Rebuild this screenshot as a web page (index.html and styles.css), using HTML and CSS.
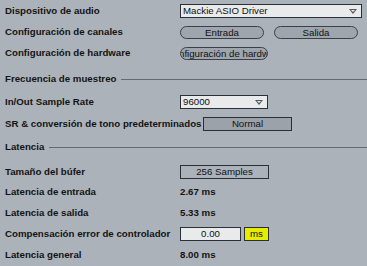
FILE: index.html
```html
<!DOCTYPE html>
<html lang="es">
<head>
    <meta charset="UTF-8">
    <title>Audio</title>
    <link rel="stylesheet" href="styles.css">
</head>
<body>
    <div class="prefs">
        <div class="row h21">
            <span class="label">Dispositivo de audio</span>
            <div class="select wide">Mackie ASIO Driver<span class="arrow"></span></div>
        </div>
        <div class="row h21">
            <span class="label">Configuración de canales</span>
            <div class="pills">
                <div class="pill">Entrada</div>
                <div class="pill">Salida</div>
            </div>
        </div>
        <div class="row h26">
            <span class="label">Configuración de hardware</span>
            <div class="pill clip"><span>nfiguración de hardw</span></div>
        </div>

        <div class="section h23">
            <span class="section-title">Frecuencia de muestreo</span>
            <span class="rule"></span>
        </div>
        <div class="row h22">
            <span class="label">In/Out Sample Rate</span>
            <div class="select">96000<span class="arrow"></span></div>
        </div>
        <div class="row h23">
            <span class="label tight">SR &amp; conversión de tono predeterminados</span>
            <div class="box dark">Normal</div>
        </div>

        <div class="section h25">
            <span class="section-title">Latencia</span>
            <span class="rule"></span>
        </div>
        <div class="row h20">
            <span class="label">Tamaño del búfer</span>
            <div class="box">256 Samples</div>
        </div>
        <div class="row h21">
            <span class="label">Latencia de entrada</span>
            <span class="value">2.67 ms</span>
        </div>
        <div class="row h21">
            <span class="label">Latencia de salida</span>
            <span class="value">5.33 ms</span>
        </div>
        <div class="row h21">
            <span class="label">Compensación error de controlador</span>
            <div class="comp">
                <div class="field">0.00</div>
                <div class="unit">ms</div>
            </div>
        </div>
        <div class="row h21">
            <span class="label">Latencia general</span>
            <span class="value">8.00 ms</span>
        </div>
    </div>
</body>
</html>
```

FILE: styles.css
```css
html, body {
    margin: 0;
    background-color: #abb2b9;
}
body {
    font-family: 'Liberation Sans', Arial, sans-serif;
    font-size: 9.7px;
    color: #141414;
    overflow: hidden;
}
.prefs {
    padding: 4px 5px 0 5px;
}
/* each row's height is the distance to the next row */
.row {
    display: grid;
    grid-template-columns: 175px 1fr;
    align-items: start;
}
.h20 { height: 20px; }
.h21 { height: 21px; }
.h22 { height: 22px; }
.h23 { height: 23px; }
.h25 { height: 25px; }
.h26 { height: 26px; }
.label, .value, .section-title {
    font-weight: bold;
    white-space: nowrap;
    line-height: 14px;
}
.label.tight {
    width: 198px;
}
.select {
    position: relative;
    box-sizing: border-box;
    width: 88px;
    height: 14px;
    line-height: 12px;
    padding-left: 2px;
    background: #e9eaeb;
    border: 1px solid #2c2f33;
    color: #111;
}
.select.wide {
    width: 182px;
}
.arrow {
    position: absolute;
    right: 4px;
    top: 4px;
    width: 0;
    height: 0;
    border-left: 4px solid transparent;
    border-right: 4px solid transparent;
    border-top: 5px solid #55595e;
}
.arrow::after {
    content: "";
    position: absolute;
    left: -2px;
    top: -4px;
    border-left: 2px solid transparent;
    border-right: 2px solid transparent;
    border-top: 2px solid #e9eaeb;
}
.pills {
    display: flex;
    gap: 10px;
}
.pill {
    box-sizing: border-box;
    width: 84px;
    height: 13px;
    margin-top: 1px;
    line-height: 11px;
    text-align: center;
    border: 1px solid #3c4046;
    border-radius: 7px;
    background: #9ea5ad;
    color: #111;
}
.pill.clip {
    width: 88px;
    overflow: hidden;
    white-space: nowrap;
    text-align: left;
}
.pill.clip span {
    margin-left: -2px;
}
.section {
    display: flex;
    align-items: center;
    gap: 5px;
    margin-right: -5px;
}
.section .section-title {
    align-self: start;
}
.section .rule {
    align-self: start;
    margin-top: 7px;
}
.rule {
    flex: 1;
    height: 1px;
    background: #646a71;
}
.box {
    box-sizing: border-box;
    width: 89px;
    height: 14px;
    line-height: 12px;
    text-align: center;
    border: 1px solid #2c2f33;
    color: #111;
}
.box.dark {
    margin-left: 23px;
    background: #9ba2aa;
}
.comp {
    display: flex;
    gap: 3px;
}
.field {
    box-sizing: border-box;
    width: 61px;
    height: 14px;
    line-height: 12px;
    text-align: center;
    background: #e9eaeb;
    border: 1px solid #2c2f33;
    color: #111;
}
.unit {
    box-sizing: border-box;
    width: 25px;
    height: 14px;
    line-height: 12px;
    text-align: center;
    background: #e6ee00;
    border: 1px solid #2c2f33;
    color: #111;
}
```
